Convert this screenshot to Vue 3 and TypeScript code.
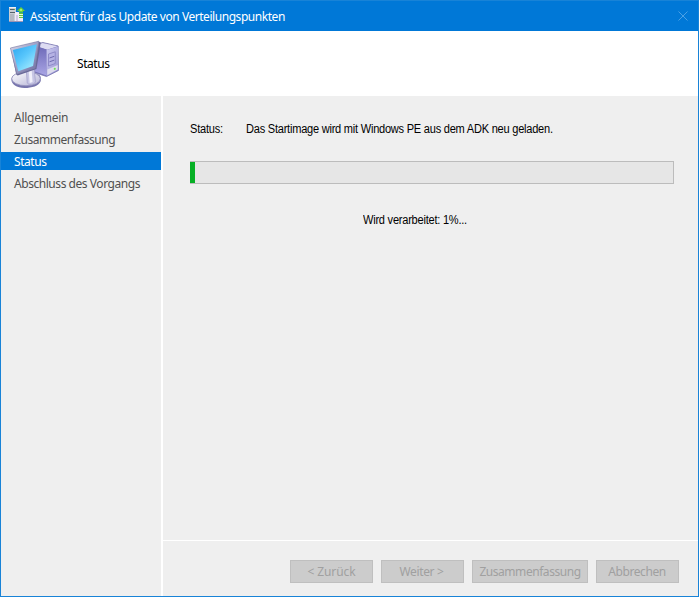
<script setup lang="ts">
import { ref } from 'vue'

interface Step { id: string; label: string }
interface WizardButton { id: string; label: string }

const steps: Step[] = [
  { id: 'general', label: 'Allgemein' },
  { id: 'summary', label: 'Zusammenfassung' },
  { id: 'status', label: 'Status' },
  { id: 'finish', label: 'Abschluss des Vorgangs' },
]
const buttons: WizardButton[] = [
  { id: 'back', label: '< Zurück' },
  { id: 'next', label: 'Weiter >' },
  { id: 'overview', label: 'Zusammenfassung' },
  { id: 'cancel', label: 'Abbrechen' },
]
const active = ref('status')
const progress = ref(1)
</script>

<template>
  <div class="window">
    <header class="titlebar">
      <svg class="app-icon" width="18" height="18" viewBox="0 0 18 18">
        <path d="M1 1h7v15H1z" fill="#c9ced4" />
        <path d="M1 1h7v1H1z" fill="#eef0f2" />
        <path d="M2 3h4v1H2zM2 6h5v1H2z" fill="#56616c" />
        <path d="M6 3h1v1H6z" fill="#5bbf3c" />
        <path d="M2 8h4v7H2z" fill="#b4b8c2" />
        <path d="M7 6h4v2h4v8H7z" fill="#efebfa" />
        <path d="M8 9h2v6H8z" fill="#d0c8e4" />
        <path d="M1 15h14v1H1z" fill="#9a94b4" />
        <path d="M12.500 1h1v1h1v1h1v1h1v1h-1.500v1.500h-4V5H9.500V4h1V3h1V2h1z" fill="#6bd237" />
        <path d="M12 3h2v2h-2z" fill="#a9ed70" />
        <path d="M11 7h4v1h-4zM11 9h4v1h-4zM11 11h4v1h-4z" fill="#63c83a" />
        <path d="M11 8h4v1h-4zM11 10h4v1h-4z" fill="#e7f9df" />
      </svg>
      <span class="title">Assistent für das Update von Verteilungspunkten</span>
      <svg class="close" width="10" height="10" viewBox="0 0 10 10">
        <path d="M.5.5l9 9M9.5.5l-9 9" stroke="#4ba0e5" stroke-width="1" />
      </svg>
    </header>

    <section class="banner">
      <svg class="computer" width="54" height="54" viewBox="0 0 56 54" preserveAspectRatio="none">
        <defs>
          <linearGradient id="screen" x1="0" y1="0" x2=".8" y2="1">
            <stop offset="0" stop-color="#2aa5ee" />
            <stop offset=".5" stop-color="#58c6fc" />
            <stop offset="1" stop-color="#a8eeff" />
          </linearGradient>
          <linearGradient id="frame" x1="0" y1="0" x2="1" y2="1">
            <stop offset="0" stop-color="#d9d9ea" />
            <stop offset="1" stop-color="#6666a0" />
          </linearGradient>
          <linearGradient id="side" x1="0" y1="0" x2="0" y2="1">
            <stop offset="0" stop-color="#6e6ab8" />
            <stop offset="1" stop-color="#a9a5e4" />
          </linearGradient>
          <linearGradient id="front" x1="0" y1="0" x2="1" y2="1">
            <stop offset="0" stop-color="#c9c8ef" />
            <stop offset="1" stop-color="#9a97d3" />
          </linearGradient>
          <linearGradient id="base" x1="0" y1="0" x2="1" y2="1">
            <stop offset="0" stop-color="#fff" />
            <stop offset="1" stop-color="#b5b3d6" />
          </linearGradient>
        </defs>
        <path d="M27 8 36 5.500l16 3.500.3 24.500L40 39.500l-13-4z" fill="#7774ba" stroke="#7a78b0" stroke-width=".8" />
        <path d="M28 8.500 36 6l15.500 3.200-11 3.500z" fill="#dddcf2" />
        <path d="m29 9.500 11 3v26l-12-4z" fill="url(#side)" />
        <path d="m40 13 11.800-3.500.2 23.500L40 39z" fill="url(#front)" />
        <path d="m42 17 7-2.200v11.700L42 29z" fill="#b5b2e4" stroke="#8380c0" stroke-width=".8" />
        <path d="m43 21 5-1.700M43 24.800l5-1.700" stroke="#6c69ad" />
        <path d="m40.800 32.500 10.700-4.500v4.500l-10.700 5.500z" fill="#dcdbec" />
        <circle cx="48.500" cy="31.800" r="1.100" fill="#69e553" />
        <path d="M3.500 42.500c0-5 8-8 17-7 8 0 13.500 2 13.500 5v3.500c-2 5-9 7-17 7-8 0-13.500-4-13.500-8.500z" fill="#7775ad" />
        <ellipse cx="18.700" cy="41.700" rx="14.800" ry="7" fill="url(#base)" stroke="#9290bb" stroke-width=".8" />
        <path d="m19 33 8-3 1.500 15c-2 3-7.500 3-8.500 1z" fill="#c7c6e4" stroke="#a3a1cb" stroke-width=".8" />
        <path d="m21.500 34 3-1 1 12-3 1z" fill="#f1f0fa" />
        <path d="M3 11.500 31.500 4.500 34 5.500 29.500 32 10 38.500 8.500 37.500z" fill="#686798" />
        <path d="M2.500 11 32 4.200 28 31 9.200 37z" fill="url(#frame)" stroke="#8584ab" stroke-width=".7" />
        <path d="M5 13 29.800 7.200 26 29 10.700 34.200z" fill="url(#screen)" />
      </svg>
      <h1>Status</h1>
    </section>

    <div class="body">
      <nav class="sidebar">
        <div v-for="s in steps" :key="s.id" class="step" :class="[s.id, { active: s.id === active }]">{{ s.label }}</div>
      </nav>
      <main class="main">
        <section class="content">
          <div class="status-row">
            <div class="label"><span class="narrow">Status:</span></div>
            <span class="narrow">Das Startimage wird mit Windows PE aus dem ADK neu geladen.</span>
          </div>
          <div class="track"><div class="fill" :style="{ width: progress + '%' }"></div></div>
          <p class="processing"><span class="narrow">Wird verarbeitet: {{ progress }}%...</span></p>
        </section>
        <footer class="footer">
          <button v-for="b in buttons" :key="b.id" disabled :class="b.id">{{ b.label }}</button>
        </footer>
      </main>
    </div>
  </div>
</template>

<style>
body { margin: 0; overflow: hidden; }
</style>
<style scoped>
* { box-sizing: border-box; }
.window {
  width: 699px; height: 597px; display: flex; flex-direction: column;
  border: 1px solid #1883d7; background: #fff; overflow: hidden;
  font-family: "Noto Sans", "Open Sans", sans-serif; font-size: 12px; white-space: nowrap;
}
.titlebar { height: 30px; flex: none; display: flex; align-items: center; padding: 0 9px 0 7px; background: #0078d7; color: #fff; }
.app-icon { margin: 0 4px 2px 0; }
.title { flex: 1; letter-spacing: -.45px; }
.close { margin-right: 1px; margin-bottom: 1px; }
.banner { height: 65px; flex: none; display: flex; align-items: center; padding-left: 7px; background: #fff; }
h1 { margin: 0 0 0 15px; font-size: 12px; font-weight: 400; line-height: 16px; color: #000; letter-spacing: -.45px; }
.body { flex: 1; display: flex; min-height: 0; }
.sidebar { width: 160px; padding-top: 12px; background: #efefef; color: #505050; }
.step { height: 18px; margin-bottom: 4px; padding-left: 13px; line-height: 19px; letter-spacing: -.45px; }
.step.general { letter-spacing: -.25px; }
.step.status { letter-spacing: -.45px; }
.step.active { background: #0078d7; color: #fff; }
.main { flex: 1; margin-left: 2px; background: #efefef; display: flex; flex-direction: column; }
.content { flex: 1; padding: 25px 24px 0 27px; font-family: "Liberation Sans", Arial, sans-serif; font-size: 12px; color: #000; }
.narrow { display: inline-block; transform: scaleX(.92); transform-origin: left center; letter-spacing: -.25px; }
.status-row { display: flex; height: 16px; line-height: 16px; }
.label { width: 56px; }
.track { height: 23px; margin-top: 24px; border: 1px solid #bcbcbc; border-left-width: 0; background: #e6e6e6; }
.fill { height: 21px; min-width: 5px; background: #06b025; }
.processing { margin: 28px 0 0 173px; line-height: 16px; }
.footer { height: 56px; border-top: 1px solid #fff; display: flex; justify-content: flex-end; gap: 8px; padding: 19px 19px 0 0; }
button { width: 83px; height: 23px; padding: 0; border: 1px solid #bfbfbf; background: #ccc; color: #a0a0a0; font: inherit; line-height: 21px; letter-spacing: -.45px; }
button.back { letter-spacing: -.1px; }
button.next { letter-spacing: -.35px; padding-right: 2px; }
button.overview { width: 116px; }
button.cancel { letter-spacing: -.4px; padding-right: 1px; }
</style>
